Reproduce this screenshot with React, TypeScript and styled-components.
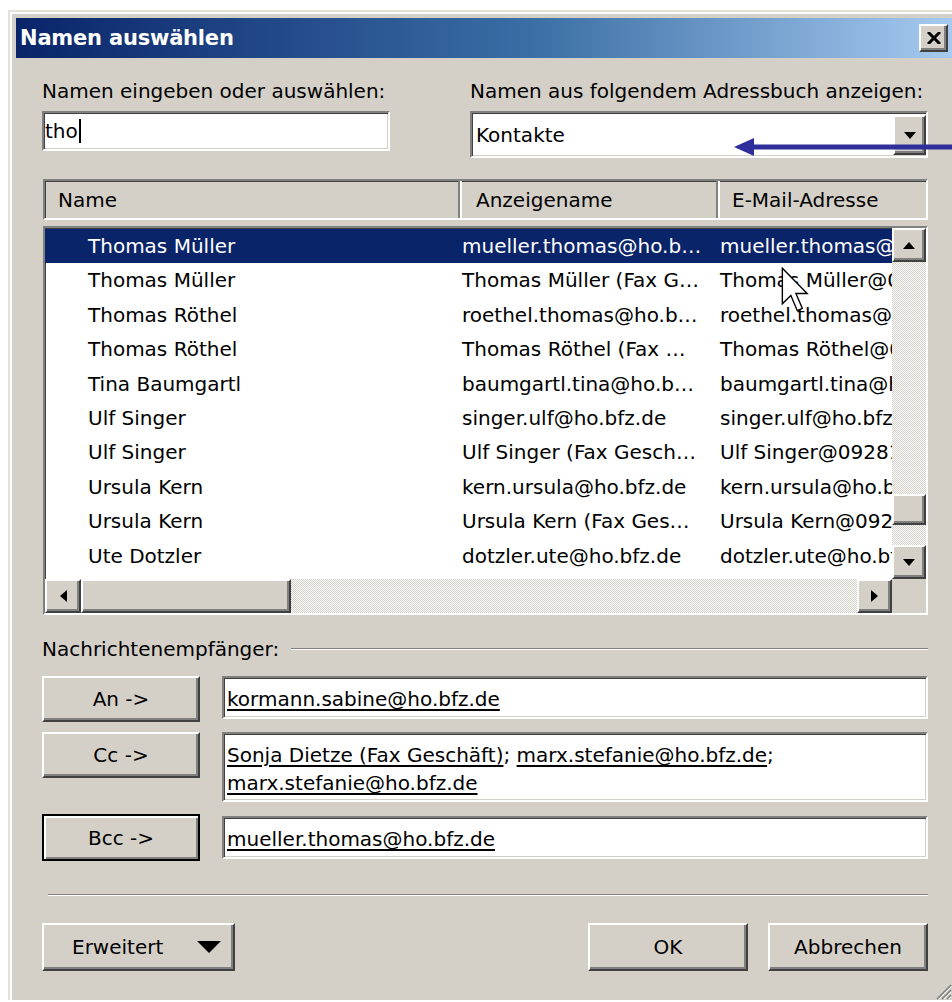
import React from 'react';
import styled, { createGlobalStyle, css } from 'styled-components';

const colors = {
  face: '#d4d0c8',
  shadow: '#808080',
  darkShadow: '#404040',
  highlight: '#ffffff',
  selection: '#0a246a',
  annotation: '#2f2f9c',
};

const GlobalStyle = createGlobalStyle`
  html, body {
    margin: 0;
    padding: 0;
    background: #fff;
    overflow: hidden;
  }
  body {
    font-family: 'DejaVu Sans', Verdana, sans-serif;
    font-size: 20px;
    color: #000;
  }
`;

const sunken = css`
  box-sizing: border-box;
  border: 2px solid;
  border-color: ${colors.shadow} ${colors.highlight} ${colors.highlight} ${colors.shadow};
  box-shadow: inset 1px 1px ${colors.darkShadow}, inset -1px -1px ${colors.face};
`;

const raised = css`
  box-sizing: border-box;
  border: 2px solid;
  border-color: ${colors.highlight} ${colors.darkShadow} ${colors.darkShadow} ${colors.highlight};
  box-shadow: inset -2px -2px ${colors.shadow};
  background: ${colors.face};
`;

type Dir = 'up' | 'down' | 'left' | 'right';

const trianglePoints: Record<Dir, string> = {
  up: '0,1 0.5,0 1,1',
  down: '0,0 1,0 0.5,1',
  left: '1,0 1,1 0,0.5',
  right: '0,0 0,1 1,0.5',
};

const Triangle = ({ dir, w, h }: { dir: Dir; w: number; h: number }) => (
  <svg width={w} height={h} viewBox="0 0 1 1" preserveAspectRatio="none">
    <polygon points={trianglePoints[dir]} fill="#000" />
  </svg>
);

type Contact = { name: string; display: string; email: string };

const contacts: Contact[] = [
  { name: 'Thomas Müller', display: 'mueller.thomas@ho.b…', email: 'mueller.thomas@ho.bfz.de' },
  { name: 'Thomas Müller', display: 'Thomas Müller (Fax G…', email: 'Thomas Müller@09281 6067' },
  { name: 'Thomas Röthel', display: 'roethel.thomas@ho.b…', email: 'roethel.thomas@ho.bfz.de' },
  { name: 'Thomas Röthel', display: 'Thomas Röthel (Fax …', email: 'Thomas Röthel@09281 6067' },
  { name: 'Tina Baumgartl', display: 'baumgartl.tina@ho.b…', email: 'baumgartl.tina@ho.bfz.de' },
  { name: 'Ulf Singer', display: 'singer.ulf@ho.bfz.de', email: 'singer.ulf@ho.bfz.de' },
  { name: 'Ulf Singer', display: 'Ulf Singer (Fax Gesch…', email: 'Ulf Singer@09281 6067' },
  { name: 'Ursula Kern', display: 'kern.ursula@ho.bfz.de', email: 'kern.ursula@ho.bfz.de' },
  { name: 'Ursula Kern', display: 'Ursula Kern (Fax Ges…', email: 'Ursula Kern@09281 6067' },
  { name: 'Ute Dotzler', display: 'dotzler.ute@ho.bfz.de', email: 'dotzler.ute@ho.bfz.de' },
];

const App = () => (
  <Page>
    <GlobalStyle />
    <Window>
      <TitleBar>
        <Title>Namen auswählen</Title>
        <CloseButton>
          <svg width="14" height="12" viewBox="0 0 14 12">
            <path d="M1 0 L13 12 M13 0 L1 12" stroke="#000" strokeWidth="3" />
          </svg>
        </CloseButton>
      </TitleBar>

      <Content>
        <TopRow>
          <FieldColumn $width={348}>
            <Label>Namen eingeben oder auswählen:</Label>
            <TextInput>
              tho
              <Caret />
            </TextInput>
          </FieldColumn>
          <FieldColumn $width={458}>
            <Label>Namen aus folgendem Adressbuch anzeigen:</Label>
            <Combo>
              <span>Kontakte</span>
              <ComboButton>
                <Triangle dir="down" w={12} h={7} />
              </ComboButton>
            </Combo>
          </FieldColumn>
        </TopRow>

        <HeaderBox>
          <HeaderCell $width={415} $pad={13}>Name</HeaderCell>
          <HeaderCell $width={258} $pad={14}>Anzeigename</HeaderCell>
          <HeaderCell $pad={12}>E-Mail-Adresse</HeaderCell>
        </HeaderBox>

        <ListBox>
          <Rows>
            {contacts.map((c, i) => (
              <Row key={i} $selected={i === 0}>
                <Cell $pad={43}>{c.name}</Cell>
                <Cell $pad={4}>{c.display}</Cell>
                <Cell $pad={4}>{c.email}</Cell>
              </Row>
            ))}
          </Rows>
          <VScroll>
            <ScrollButton $h={34}>
              <Triangle dir="up" w={12} h={7} />
            </ScrollButton>
            <Track $vertical>
              <VThumb $offset={232} />
            </Track>
            <ScrollButton $h={34}>
              <Triangle dir="down" w={12} h={7} />
            </ScrollButton>
          </VScroll>
          <HScroll>
            <ScrollButton $w={36}>
              <Triangle dir="left" w={7} h={12} />
            </ScrollButton>
            <HThumb />
            <Track />
            <ScrollButton $w={35}>
              <Triangle dir="right" w={7} h={12} />
            </ScrollButton>
          </HScroll>
          <Corner />
        </ListBox>

        <GroupHeader>
          <span>Nachrichtenempfänger:</span>
          <Rule />
        </GroupHeader>

        <Recipient>
          <AddressButton>An -&gt;</AddressButton>
          <AddressField $height={43}>
            <Address>kormann.sabine@ho.bfz.de</Address>
          </AddressField>
        </Recipient>
        <Recipient $gap={10}>
          <AddressButton>Cc -&gt;</AddressButton>
          <AddressField $height={70}>
            <Address>Sonja Dietze (Fax Geschäft)</Address>; <Address>marx.stefanie@ho.bfz.de</Address>;{' '}
            <Address>marx.stefanie@ho.bfz.de</Address>
          </AddressField>
        </Recipient>
        <Recipient $gap={12}>
          <AddressButton $focused>Bcc -&gt;</AddressButton>
          <AddressField $height={43} $offset={2}>
            <Address>mueller.thomas@ho.bfz.de</Address>
          </AddressField>
        </Recipient>

        <Separator />

        <Footer>
          <MenuButton>
            <span>Erweitert</span>
            <Triangle dir="down" w={24} h={12} />
          </MenuButton>
          <DialogButtons>
            <PushButton>OK</PushButton>
            <PushButton>Abbrechen</PushButton>
          </DialogButtons>
        </Footer>

        <SizeGrip>
          <svg width="18" height="18" viewBox="0 0 18 18">
            <path d="M17 3 L3 17 M17 8 L8 17 M17 13 L13 17" stroke="#808080" strokeWidth="1.5" />
            <path d="M17 5 L5 17 M17 10 L10 17 M17 15 L15 17" stroke="#fff" strokeWidth="1" />
          </svg>
        </SizeGrip>
      </Content>
    </Window>

    <Pointer>
      <svg width="220" height="22" viewBox="0 0 220 22">
        <polygon points="0,11 20,2 20,20" fill={colors.annotation} />
        <rect x="18" y="8.5" width="202" height="5" fill={colors.annotation} />
      </svg>
    </Pointer>

    <MouseCursor>
      <svg width="28" height="46" viewBox="0 0 12 20">
        <path d="M0.5 0.5 L0.5 16 L4.2 12.4 L7 19 L9.2 18 L6.4 11.5 L11.3 11.5 Z" fill="#fff" stroke="#000" strokeWidth="0.6" />
      </svg>
    </MouseCursor>
  </Page>
);

export default App;

const Page = styled.div`
  position: relative;
  box-sizing: border-box;
  width: 952px;
  height: 1002px;
  padding: 10px 0 0 8px;
  overflow: hidden;
`;

const Window = styled.div`
  box-sizing: border-box;
  width: 952px;
  padding: 6px 8px 0 6px;
  background: ${colors.face};
  border-top: 2px solid #e4e1db;
  border-left: 2px solid #e4e1db;
  box-shadow: inset 2px 2px #fff;
`;

const TitleBar = styled.div`
  display: flex;
  align-items: center;
  justify-content: space-between;
  height: 40px;
  padding: 0 4px;
  background: linear-gradient(to right, #0a246a 0%, #3a6ea5 55%, #a6caf0 100%);
`;

const Title = styled.span`
  color: #fff;
  font-weight: bold;
  font-size: 21px;
  letter-spacing: -0.2px;
`;

const CloseButton = styled.div`
  ${raised};
  width: 29px;
  height: 28px;
  display: flex;
  align-items: center;
  justify-content: center;
`;

const Content = styled.div`
  position: relative;
  padding: 21px 24px 29px 26px;
`;

const TopRow = styled.div`
  display: flex;
  justify-content: space-between;
  align-items: flex-start;
`;

const FieldColumn = styled.div<{ $width: number }>`
  display: flex;
  flex-direction: column;
  gap: 8px;
  width: ${(p) => p.$width}px;
`;

const Label = styled.div`
  line-height: 24px;
  white-space: nowrap;
`;

const TextInput = styled.div`
  ${sunken};
  height: 40px;
  padding: 0 1px;
  display: flex;
  align-items: center;
  background: #fff;
`;

const Caret = styled.span`
  display: inline-block;
  width: 2px;
  height: 24px;
  margin-left: 1px;
  background: #000;
`;

const Combo = styled.div`
  ${sunken};
  height: 47px;
  padding: 0 0 0 4px;
  display: flex;
  align-items: center;
  justify-content: space-between;
  background: #fff;
`;

const ComboButton = styled.div`
  ${raised};
  width: 33px;
  height: 40px;
  margin-top: 1px;
  display: flex;
  align-items: center;
  justify-content: center;
`;

const HeaderBox = styled.div`
  ${sunken};
  display: flex;
  height: 41px;
  margin: 21px 0 0 1px;
  background: ${colors.face};
  overflow: hidden;
`;

const HeaderCell = styled.div<{ $width?: number; $pad: number }>`
  box-sizing: border-box;
  display: flex;
  align-items: center;
  flex: ${(p) => (p.$width ? `0 0 ${p.$width}px` : '1')};
  padding-left: ${(p) => p.$pad}px;
  white-space: nowrap;
  &:not(:last-child) {
    border-right: 2px solid ${colors.shadow};
  }
  &:not(:first-child) {
    border-left: 2px solid ${colors.highlight};
  }
`;

const ListBox = styled.div`
  ${sunken};
  display: grid;
  grid-template-columns: 1fr 34px;
  grid-template-rows: 1fr 34px;
  height: 389px;
  margin: 6px 0 0 1px;
  background: #fff;
`;

const Rows = styled.div`
  overflow: hidden;
  padding-top: 1px;
`;

const Row = styled.div<{ $selected?: boolean }>`
  display: grid;
  grid-template-columns: 413px 258px 1fr;
  height: 34.4px;
  line-height: 34.4px;
  background: ${(p) => (p.$selected ? colors.selection : 'transparent')};
  color: ${(p) => (p.$selected ? '#fff' : '#000')};
`;

const Cell = styled.div<{ $pad: number }>`
  padding-left: ${(p) => p.$pad}px;
  white-space: nowrap;
  overflow: hidden;
`;

const VScroll = styled.div`
  display: flex;
  flex-direction: column;
`;

const HScroll = styled.div`
  display: flex;
`;

const ScrollButton = styled.div<{ $w?: number; $h?: number }>`
  ${raised};
  flex: 0 0 auto;
  width: ${(p) => (p.$w ? `${p.$w}px` : '100%')};
  height: ${(p) => (p.$h ? `${p.$h}px` : '100%')};
  display: flex;
  align-items: center;
  justify-content: center;
`;

const Track = styled.div<{ $vertical?: boolean }>`
  flex: 1;
  display: flex;
  flex-direction: ${(p) => (p.$vertical ? 'column' : 'row')};
  background: repeating-conic-gradient(#ffffff 0 25%, ${colors.face} 0 50%) 0 0 / 2px 2px;
`;

const VThumb = styled.div<{ $offset: number }>`
  ${raised};
  height: 31px;
  margin-top: ${(p) => p.$offset}px;
`;

const HThumb = styled.div`
  ${raised};
  flex: 0 0 210px;
`;

const Corner = styled.div`
  background: ${colors.face};
`;

const GroupHeader = styled.div`
  display: flex;
  align-items: center;
  margin-top: 22px;
  line-height: 24px;
  white-space: nowrap;
`;

const Rule = styled.div`
  flex: 1;
  margin-left: 12px;
  border-top: 1px solid ${colors.shadow};
  border-bottom: 1px solid ${colors.highlight};
`;

const Recipient = styled.div<{ $gap?: number }>`
  display: flex;
  align-items: flex-start;
  gap: 22px;
  margin-top: ${(p) => p.$gap ?? 15}px;
`;

const AddressButton = styled.div<{ $focused?: boolean }>`
  ${raised};
  flex: 0 0 158px;
  height: ${(p) => (p.$focused ? 47 : 46)}px;
  display: flex;
  align-items: center;
  justify-content: center;
  ${(p) =>
    p.$focused &&
    css`
      border: 2px solid #000;
      box-shadow: inset 2px 2px #fff, inset -2px -2px ${colors.shadow};
    `}
`;

const AddressField = styled.div<{ $height: number; $offset?: number }>`
  ${sunken};
  flex: 1;
  height: ${(p) => p.$height}px;
  margin-top: ${(p) => p.$offset ?? 0}px;
  padding: 7px 3px 0;
  line-height: 28px;
  background: #fff;
`;

const Address = styled.span`
  text-decoration: underline;
  text-underline-offset: 3px;
`;

const Separator = styled.div`
  margin: 33px 0 0 6px;
  border-top: 1px solid ${colors.shadow};
  border-bottom: 1px solid ${colors.highlight};
`;

const Footer = styled.div`
  display: flex;
  justify-content: space-between;
  margin-top: 27px;
`;

const pushButton = css`
  ${raised};
  height: 48px;
  display: flex;
  align-items: center;
`;

const MenuButton = styled.div`
  ${pushButton};
  width: 193px;
  justify-content: space-between;
  padding: 0 12px 0 28px;
`;

const DialogButtons = styled.div`
  display: flex;
  gap: 20px;
`;

const PushButton = styled.div`
  ${pushButton};
  width: 160px;
  justify-content: center;
`;

const SizeGrip = styled.div`
  position: absolute;
  right: 0;
  bottom: 0;
  line-height: 0;
`;

const Pointer = styled.div`
  position: absolute;
  left: 734px;
  top: 136px;
  line-height: 0;
`;

const MouseCursor = styled.div`
  position: absolute;
  left: 781px;
  top: 267px;
  line-height: 0;
`;
